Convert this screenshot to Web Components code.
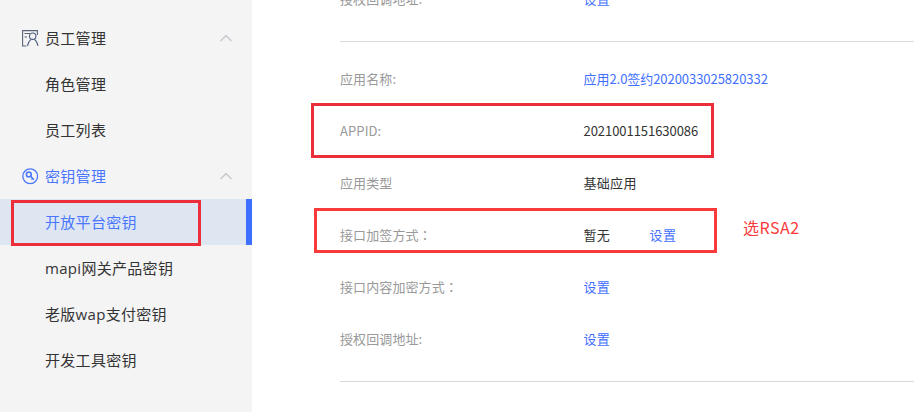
<!DOCTYPE html>
<html>
<head>
<meta charset="utf-8">
<style>
  html, body { margin: 0; padding: 0; height: 100%; overflow: hidden; background: #fff; }
  body {
    position: relative;
    display: flex;
    font-family: "Noto Sans CJK SC", "Liberation Sans", sans-serif;
  }
</style>
</head>
<body>
<side-bar>
  <nav-group label="员工管理">
    <svg slot="icon" width="17" height="17" viewBox="0 0 17 17" fill="none" stroke="#5b6478" stroke-width="1.1">
      <path d="M4.5 16H0.6V0.6H15.4V5"/>
      <path d="M2.5 3.5H8M2.5 7H5"/>
      <circle cx="10.7" cy="6.2" r="3.2" stroke="#4b5a80"/>
      <path d="M5.5 15.8C6.2 12.5 7.5 10.5 9 9.4M16 15.8C15.2 12.5 14 10.5 12.4 9.4" stroke="#4b5a80"/>
    </svg>
    <nav-item>角色管理</nav-item>
    <nav-item>员工列表</nav-item>
  </nav-group>
  <nav-group label="密钥管理" accent>
    <svg slot="icon" width="17" height="17" viewBox="0 0 17 17" fill="none" stroke="#4a76ff" stroke-width="1.3">
      <circle cx="8.2" cy="8.2" r="7.4"/>
      <circle cx="6.8" cy="6.4" r="2.4" stroke-width="1.6"/>
      <path d="M8.6 8.2L12 11.8M10.6 10.4L9.4 11.6" stroke-width="1.4"/>
    </svg>
    <nav-item active>开放平台密钥</nav-item>
    <nav-item>mapi网关产品密钥</nav-item>
    <nav-item>老版wap支付密钥</nav-item>
    <nav-item>开发工具密钥</nav-item>
  </nav-group>
</side-bar>

<app-panel>
  <info-row label="授权回调地址:" link>设置</info-row>
  <panel-rule></panel-rule>
  <info-row label="应用名称:" link tight>应用2.0签约2020033025820332</info-row>
  <info-row label="APPID:" tight>2021001151630086</info-row>
  <info-row label="应用类型">基础应用</info-row>
  <info-row label="接口加签方式：">暂无<a-link slot="extra">设置</a-link></info-row>
  <info-row label="接口内容加密方式：" link>设置</info-row>
  <info-row label="授权回调地址:" link>设置</info-row>
  <panel-rule></panel-rule>
</app-panel>

<mark-box style="left:11px;top:200px;width:190px;height:46px;--c:#ec2d3a"></mark-box>
<mark-box style="left:311px;top:103px;width:403px;height:55px;--c:#ec2d3a"></mark-box>
<mark-box style="left:314px;top:208px;width:403px;height:45px;--c:#f93a3a"></mark-box>
<mark-box note style="left:743px;top:216px;">选RSA2</mark-box>

<script>
function tpl(html) {
  const t = document.createElement('template');
  t.innerHTML = html;
  return t;
}

class Base extends HTMLElement {
  constructor() {
    super();
    this.attachShadow({ mode: 'open' });
    this.shadowRoot.appendChild(this.constructor.template.content.cloneNode(true));
  }
}

class SideBar extends Base {
  static template = tpl(`
    <style>
      :host {
        display: block;
        flex: 0 0 252px;
        height: 412px;
        box-sizing: border-box;
        padding-top: 15px;
        background: #f4f4f4;
        font-family: "Open Sans", "Noto Sans CJK SC", sans-serif;
        letter-spacing: 0.3px;
      }
    </style>
    <slot></slot>`);
}

class NavGroup extends Base {
  static template = tpl(`
    <style>
      :host { display: block; font-size: 15px; color: #333; }
      .head {
        display: flex;
        align-items: center;
        height: 46px;
        padding: 0 20px 0 22px;
      }
      :host([accent]) .head { color: #4a76ff; }
      .icon { width: 23px; display: flex; align-items: center; }
      .text { flex: 1; padding-bottom: 2px; }
      svg.chev { display: block; }
    </style>
    <div class="head">
      <div class="icon"><slot name="icon"></slot></div>
      <span class="text"></span>
      <svg class="chev" width="12" height="8" viewBox="0 0 12 8" fill="none" stroke="#c9c9d0" stroke-width="1.5"><path d="M0.6 7L6 1.6L11.4 7"/></svg>
    </div>
    <slot></slot>`);
  connectedCallback() {
    this.shadowRoot.querySelector('.text').textContent = this.getAttribute('label');
  }
}

class NavItem extends Base {
  static template = tpl(`
    <style>
      :host {
        display: flex;
        align-items: center;
        height: 46px;
        box-sizing: border-box;
        padding: 0 0 2px 45px;
        font-size: 15px;
        color: #333;
      }
      :host([active]) {
        background: #dde6f1;
        color: #4a76ff;
        border-right: 6px solid #3f6fff;
      }
    </style>
    <slot></slot>`);
}

class AppPanel extends Base {
  static template = tpl(`
    <style>
      :host {
        display: block;
        flex: 1;
        margin-top: -27px;
        padding-left: 88px;
        font-size: 13px;
      }
    </style>
    <slot></slot>`);
}

class PanelRule extends Base {
  static template = tpl(`
    <style>
      :host { display: block; height: 1px; background: #d9d9d9; margin: 16px 0 11px; }
    </style>`);
}

class ALink extends Base {
  static template = tpl(`
    <style>
      :host { display: inline; color: #3f6fff; }
    </style>
    <slot></slot>`);
}

class InfoRow extends Base {
  static template = tpl(`
    <style>
      :host {
        display: flex;
        align-items: center;
        height: 52px;
        box-sizing: border-box;
        padding-bottom: 2px;
        color: #333;
      }
      :host([link]) .value { color: #3f6fff; }
      :host([tight]) .value { letter-spacing: -0.05px; }
      .label { width: 243.5px; color: #999; letter-spacing: 0.1px; }
      .colon { font-family: "Noto Sans CJK TC", sans-serif; }
      .value { white-space: nowrap; letter-spacing: 0.3px; }
      .extra { margin-left: 39.5px; letter-spacing: 0.3px; }
    </style>
    <div class="label"></div>
    <div class="value"><slot></slot></div>
    <div class="extra"><slot name="extra"></slot></div>`);
  connectedCallback() {
    // 全角冒号用繁中字形，才居中
    const label = this.shadowRoot.querySelector('.label');
    const text = this.getAttribute('label');
    if (text.endsWith('：')) {
      label.textContent = text.slice(0, -1);
      const colon = document.createElement('span');
      colon.className = 'colon';
      colon.textContent = '：';
      label.appendChild(colon);
    } else {
      label.textContent = text;
    }
  }
}

class MarkBox extends Base {
  static template = tpl(`
    <style>
      :host {
        position: absolute;
        box-sizing: border-box;
        border: 3px solid var(--c);
      }
      :host([note]) {
        border: 0;
        font-size: 16px;
        line-height: 22px;
        letter-spacing: 0.5px;
        color: #f93a3a;
      }
    </style>
    <slot></slot>`);
}

customElements.define('side-bar', SideBar);
customElements.define('nav-group', NavGroup);
customElements.define('nav-item', NavItem);
customElements.define('app-panel', AppPanel);
customElements.define('panel-rule', PanelRule);
customElements.define('a-link', ALink);
customElements.define('info-row', InfoRow);
customElements.define('mark-box', MarkBox);
</script>
</body>
</html>
